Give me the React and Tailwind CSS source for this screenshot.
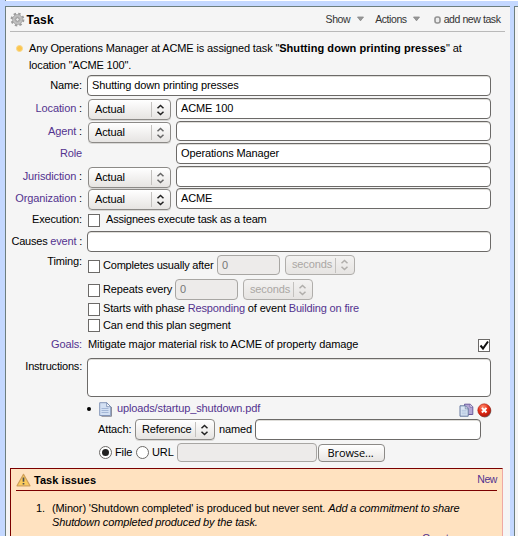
import React from "react";

const FIELD = "h-[21px] shrink-0 rounded-[4px] border border-[#6c6a68] bg-white px-1 leading-[18px] shadow-[inset_0_1px_0_#deddd9]";
const DISABLED = "shrink-0 rounded-[4px] border border-[#a8a6a3] bg-[#edebea] px-1 leading-[18px] text-[#777]";
const LINK = "text-[#53338f]";

function Label({ children, link, className = "" }) {
  return (
    <div className={`w-[76px] shrink-0 text-right leading-[21px] ${link ? LINK : ""} ${className}`}>
      {children}
    </div>
  );
}

function Arrows({ color = "#222" }) {
  return (
    <svg width="9" height="12" viewBox="0 0 9 12" fill="none" stroke={color} strokeWidth="1.5">
      <path d="M1.5 4.3 4.5 1.5 7.5 4.3M1.5 7.7 4.5 10.5 7.5 7.7" />
    </svg>
  );
}

function Select({ children, className = "", disabled, arrow }) {
  return (
    <div
      className={`flex h-[21px] shrink-0 items-center rounded-[4px] border pl-[6px] pr-[5px] ${
        disabled
          ? "border-[#b0aeab] bg-gradient-to-b from-[#f3f2f1] to-[#e6e4e2] text-[#aaa7a4]"
          : "border-[#8c8a87] bg-gradient-to-b from-white to-[#e6e4e2] shadow-[0_1px_0_#d8d7d5]"
      } ${className}`}
    >
      <span className="flex-1 pb-px leading-[17px]">{children}</span>
      <span className="mr-[4px] h-[15px] w-px bg-[#c3c1be]" />
      <Arrows color={disabled ? "#b0aeab" : arrow} />
    </div>
  );
}

function Check({ checked, className = "" }) {
  return (
    <div className={`h-[13px] w-[12px] shrink-0 border border-[#6c6a68] bg-white ${className}`}>
      {checked && (
        <svg width="11" height="11" viewBox="0 0 11 11" fill="none" stroke="#111" strokeWidth="2">
          <path d="M1.5 5.5 4 8.5 9 1.5" />
        </svg>
      )}
    </div>
  );
}

function Radio({ checked }) {
  return (
    <div className="flex h-[13px] w-[13px] shrink-0 items-center justify-center rounded-full border border-[#6c6a68] bg-white">
      {checked && <span className="h-[7px] w-[7px] rounded-full bg-[#222]" />}
    </div>
  );
}

function Gear() {
  return (
    <svg width="15" height="15" viewBox="0 0 15 15">
      <circle cx="7.5" cy="7.5" r="5.8" fill="none" stroke="#9c9c9c" strokeWidth="2.2" strokeDasharray="2.4 2.155" />
      <circle cx="7.5" cy="7.5" r="4.9" fill="#c6c6c6" stroke="#a0a0a0" strokeWidth="0.9" />
      <circle cx="7.5" cy="7.5" r="2.9" fill="none" stroke="#b4b4b4" />
      <circle cx="7.5" cy="7.5" r="1.8" fill="#ececec" stroke="#8c8c8c" strokeWidth="0.9" />
    </svg>
  );
}

function Triangle() {
  return (
    <svg width="7" height="6" viewBox="0 0 7 6">
      <path d="M.5 1h6L3.5 4.8z" fill="#999" stroke="#858585" strokeWidth=".8" />
    </svg>
  );
}

function Ring() {
  return (
    <svg width="7" height="8" viewBox="0 0 7 8">
      <rect x="1" y="1" width="5" height="6" rx="2" fill="#ececec" stroke="#929292" strokeWidth="1.6" />
    </svg>
  );
}

function PageIcon() {
  return (
    <svg width="13" height="15" viewBox="0 0 13 15">
      <path d="M2.5 14.3h10V5" fill="none" stroke="#8d8d95" />
      <path d="M.7.7h7l4 4v8.8h-11z" fill="#d3e0f3" stroke="#8395b8" />
      <path d="M7.7.7v4h4z" fill="#fff" stroke="#6d83ab" strokeWidth=".8" />
      <path d="M2.5 6.5h7M2.5 8.5h7M2.5 10.5h7" stroke="#a3b6d6" />
    </svg>
  );
}

function CopyIcon() {
  return (
    <svg width="15" height="15" viewBox="0 0 15 15">
      <path d="M5.5 1.2h5.8l2.5 2.6v7.7H5.5z" fill="#b2a5d4" stroke="#6a5a9b" />
      <path d="M11 1.5v2.6h2.6" fill="#fff" stroke="#6a5a9b" strokeWidth=".7" />
      <path d="M1 2.8h5.3l2.9 3v7.4H1z" fill="#dbe7f5" stroke="#66799f" />
      <path d="M6.3 2.8v3h2.9z" fill="#fff" stroke="#66799f" strokeWidth=".7" />
      <path d="M2.6 7.3h5M2.6 9h5M2.6 10.8h5" stroke="#a9bcd8" strokeWidth=".8" />
    </svg>
  );
}

function DeleteIcon() {
  return (
    <svg width="15" height="15" viewBox="0 0 15 15">
      <defs>
        <radialGradient id="red" cx=".4" cy=".25" r=".8">
          <stop offset="0" stopColor="#ff8d70" />
          <stop offset=".5" stopColor="#e8321a" />
          <stop offset="1" stopColor="#b01208" />
        </radialGradient>
      </defs>
      <circle cx="7.9" cy="8" r="6.4" fill="#777" />
      <circle cx="7.2" cy="7.2" r="6.4" fill="url(#red)" stroke="#ad2314" strokeWidth=".6" />
      <path d="m4.9 4.9 4.6 4.6m0-4.6L4.9 9.5" stroke="#fff" strokeWidth="2" />
    </svg>
  );
}

function Warning() {
  return (
    <svg width="15" height="14" viewBox="0 0 15 14">
      <path d="M7.5 1.3 14 12.8H1z" fill="#fbcb5c" stroke="#cf9f5b" strokeWidth="1.2" strokeLinejoin="round" />
      <path d="M7.5 4.6v4.2M7.5 9.9v1.6" stroke="#505050" strokeWidth="1.7" />
    </svg>
  );
}

function ActualRow({ label, value, className, arrow = "#222", fieldHeight = "" }) {
  return (
    <div className={`flex items-start ${className}`}>
      <Label className="whitespace-pre"><span className={LINK}>{label}</span> :</Label>
      <Select arrow={arrow} className="mt-px ml-[6px] w-[83px]">Actual</Select>
      <div className={`${FIELD} ${fieldHeight} ml-[5px] w-[315px]`}>{value}</div>
    </div>
  );
}

export default function App() {
  return (
    <div className="flex h-[536px] w-[518px] flex-col overflow-hidden bg-[#c4d8ff] font-['Liberation_Sans',Arial,sans-serif] text-[11px] tracking-[-0.13px] whitespace-nowrap text-black">
      <div className="ml-[5px] h-px shrink-0 border-l border-[#6d7e7e] bg-white" />
      <div className="mt-[5px] flex min-h-0 flex-1">
        <div className="ml-[5px] flex w-[505px] shrink-0 flex-col overflow-hidden border-t border-l border-[#6d7e7e] bg-[#f5f5f5]">
          <header className="mr-[5px] ml-[4px] flex h-[25px] shrink-0 items-center border-b border-[#b9b9b9] text-[10.5px] tracking-[-0.42px] text-[#333]">
            <Gear />
            <h1 className="ml-[1.5px] flex-1 pt-[2px] text-[12px] font-bold tracking-[0.2px] text-black">Task</h1>
            <span className="pt-px">Show</span>
            <span className="ml-[7px]"><Triangle /></span>
            <span className="ml-[11px] pt-px">Actions</span>
            <span className="ml-[6px]"><Triangle /></span>
            <span className="mt-[2px] ml-[14px]"><Ring /></span>
            <span className="mr-[4.5px] ml-[3px] pt-px">add new task</span>
          </header>

          <div className="mt-[8px] flex h-[35px] shrink-0 leading-[17px]">
            <span className="mt-[5px] ml-[10px] h-[7px] w-[7px] rounded-full border border-[#f8d88c] bg-[#fbc64f]" />
            <p className="ml-[6px] tracking-[-0.14px]">
              Any Operations Manager at ACME is assigned task "<b className="tracking-[0.06px]">Shutting down printing presses</b>" at
              <br />location "ACME 100".
            </p>
          </div>

          <div className="flex h-[23px] shrink-0">
            <Label>Name:</Label>
            <div className={`${FIELD} ml-[5px] w-[404px]`}>Shutting down printing presses</div>
          </div>
          <ActualRow label="Location" value="ACME 100" className="h-[23px] shrink-0" />
          <ActualRow label="Agent" className="h-[22px] shrink-0" arrow="#666" fieldHeight="!h-[20px]" />
          <div className="flex h-[23px] shrink-0">
            <Label link>Role</Label>
            <div className={`${FIELD} ml-[94px] w-[315px]`}>Operations Manager</div>
          </div>
          <ActualRow label="Jurisdiction" className="h-[22px] shrink-0" arrow="#666" />
          <ActualRow label="Organization" value="ACME" className="h-[22px] shrink-0" />
          <div className="flex h-[21px] shrink-0">
            <Label className="-mt-px">Execution:</Label>
            <Check className="mt-[4px] ml-[6px]" />
            <span className="ml-[6px] leading-[19px] tracking-[-0.2px]">Assignees execute task as a team</span>
          </div>
          <div className="flex h-[24px] shrink-0">
            <Label className="whitespace-pre tracking-[-0.2px]">Causes <span className={LINK}>event</span> :</Label>
            <div className={`${FIELD} ml-[5px] w-[404px]`} />
          </div>
          <div className="flex h-[24px] shrink-0">
            <Label className="-mt-[4px]">Timing:</Label>
            <Check className="mt-[5px] ml-[6px]" />
            <span className="ml-[3px] w-[114px] leading-[21px] tracking-[-0.2px]">Completes usually after</span>
            <div className={`${DISABLED} h-[20px] w-[63px]`}>0</div>
            <Select disabled className="ml-[5px] !h-[20px] w-[70px]">seconds</Select>
          </div>
          <div className="flex h-[23px] shrink-0 pl-[82px]">
            <Check className="mt-[5px]" />
            <span className="ml-[3px] w-[72px] leading-[21px]">Repeats every</span>
            <div className={`${DISABLED} h-[21px] w-[63px]`}>0</div>
            <Select disabled className="ml-[5px] w-[70px]">seconds</Select>
          </div>
          <div className="flex h-[17px] shrink-0 pl-[82px]">
            <Check className="mt-px" />
            <span className="ml-[3px] leading-[13px] tracking-[-0.15px]">
              Starts with phase <span className={LINK}>Responding</span> of event <span className={LINK}>Building on fire</span>
            </span>
          </div>
          <div className="flex h-[16px] shrink-0 pl-[82px]">
            <Check />
            <span className="ml-[3px] leading-[13px]">Can end this plan segment</span>
          </div>
          <div className="flex h-[23px] shrink-0">
            <Label link className="-mt-px">Goals:</Label>
            <span className="ml-[6px] w-[390px] leading-[19px] tracking-[-0.11px]">Mitigate major material risk to ACME of property damage</span>
            <Check checked className="mt-[4px]" />
          </div>
          <div className="flex h-[42px] shrink-0">
            <Label className="-mt-[2px] tracking-[-0.2px]">Instructions:</Label>
            <div className={`${FIELD} ml-[5px] !h-[39px] w-[404px]`} />
          </div>

          <div className="flex h-[19px] shrink-0 items-start pl-[81px]">
            <span className="mt-[7px] h-[4px] w-[4px] rounded-full bg-black" />
            <span className="mt-[2px] ml-[8px]"><PageIcon /></span>
            <span className={`ml-[5px] flex-1 leading-[17px] ${LINK}`}>uploads/startup_shutdown.pdf</span>
            <span className="mt-[3px]"><CopyIcon /></span>
            <span className="mt-[3px] mr-[18px] ml-[3px]"><DeleteIcon /></span>
          </div>
          <div className="flex h-[24px] shrink-0 pl-[92px]">
            <span className="w-[37px] leading-[21px]">Attach:</span>
            <Select className="w-[80px]">Reference</Select>
            <span className="ml-[4px] w-[36px] leading-[21px]">named</span>
            <div className={`${FIELD} w-[226px]`} />
          </div>
          <div className="flex h-[25px] shrink-0 pl-[93px]">
            <div className="mt-[3px]"><Radio checked /></div>
            <span className="ml-[3px] w-[21px] leading-[19px]">File</span>
            <div className="mt-[3px]"><Radio /></div>
            <span className="ml-[3px] w-[25px] leading-[19px]">URL</span>
            <div className={`${DISABLED} h-[19px] w-[140px]`} />
            <div className="mt-px ml-px flex h-[18px] w-[67px] items-center justify-center rounded-[4px] border border-[#8c8a87] bg-gradient-to-b from-white to-[#e8e6e4] pr-[2px] font-['Open_Sans','DejaVu_Sans',sans-serif] text-[11px] leading-[16px] tracking-[-0.1px]">
              Browse...
            </div>
          </div>

          <section className="ml-[4px] h-[75px] w-[493px] shrink-0 border-t border-r border-l border-t-[#7b0000] border-r-[#efa9a4] border-l-[#7b0000] bg-[#ffe2c0] px-[5px]">
            <div className="flex h-[22px] items-center border-b border-[#7b0000]">
              <Warning />
              <h2 className="ml-[3px] flex-1 pt-[2px] text-[11px] font-bold tracking-[0.05px]">Task issues</h2>
              <span className={`${LINK} pt-px text-[10.5px] tracking-[-0.42px]`}>New</span>
            </div>
            <ol className="mt-[10px] leading-[14px]">
              <li className="flex">
                <span className="ml-[20px] w-[16px]">1.</span>
                <span>(Minor) 'Shutdown completed' is produced but never sent. <i>Add a commitment to share<br />Shutdown completed produced by the task.</i></span>
              </li>
            </ol>
            <div className={`mt-[2px] ml-[406px] leading-[14px] tracking-[0px] ${LINK}`}>Create</div>
          </section>
        </div>
        <div className="ml-[4px] flex-1 border-t border-l border-[#6d7e7e] bg-[#f5f5f5]" />
      </div>
    </div>
  );
}
